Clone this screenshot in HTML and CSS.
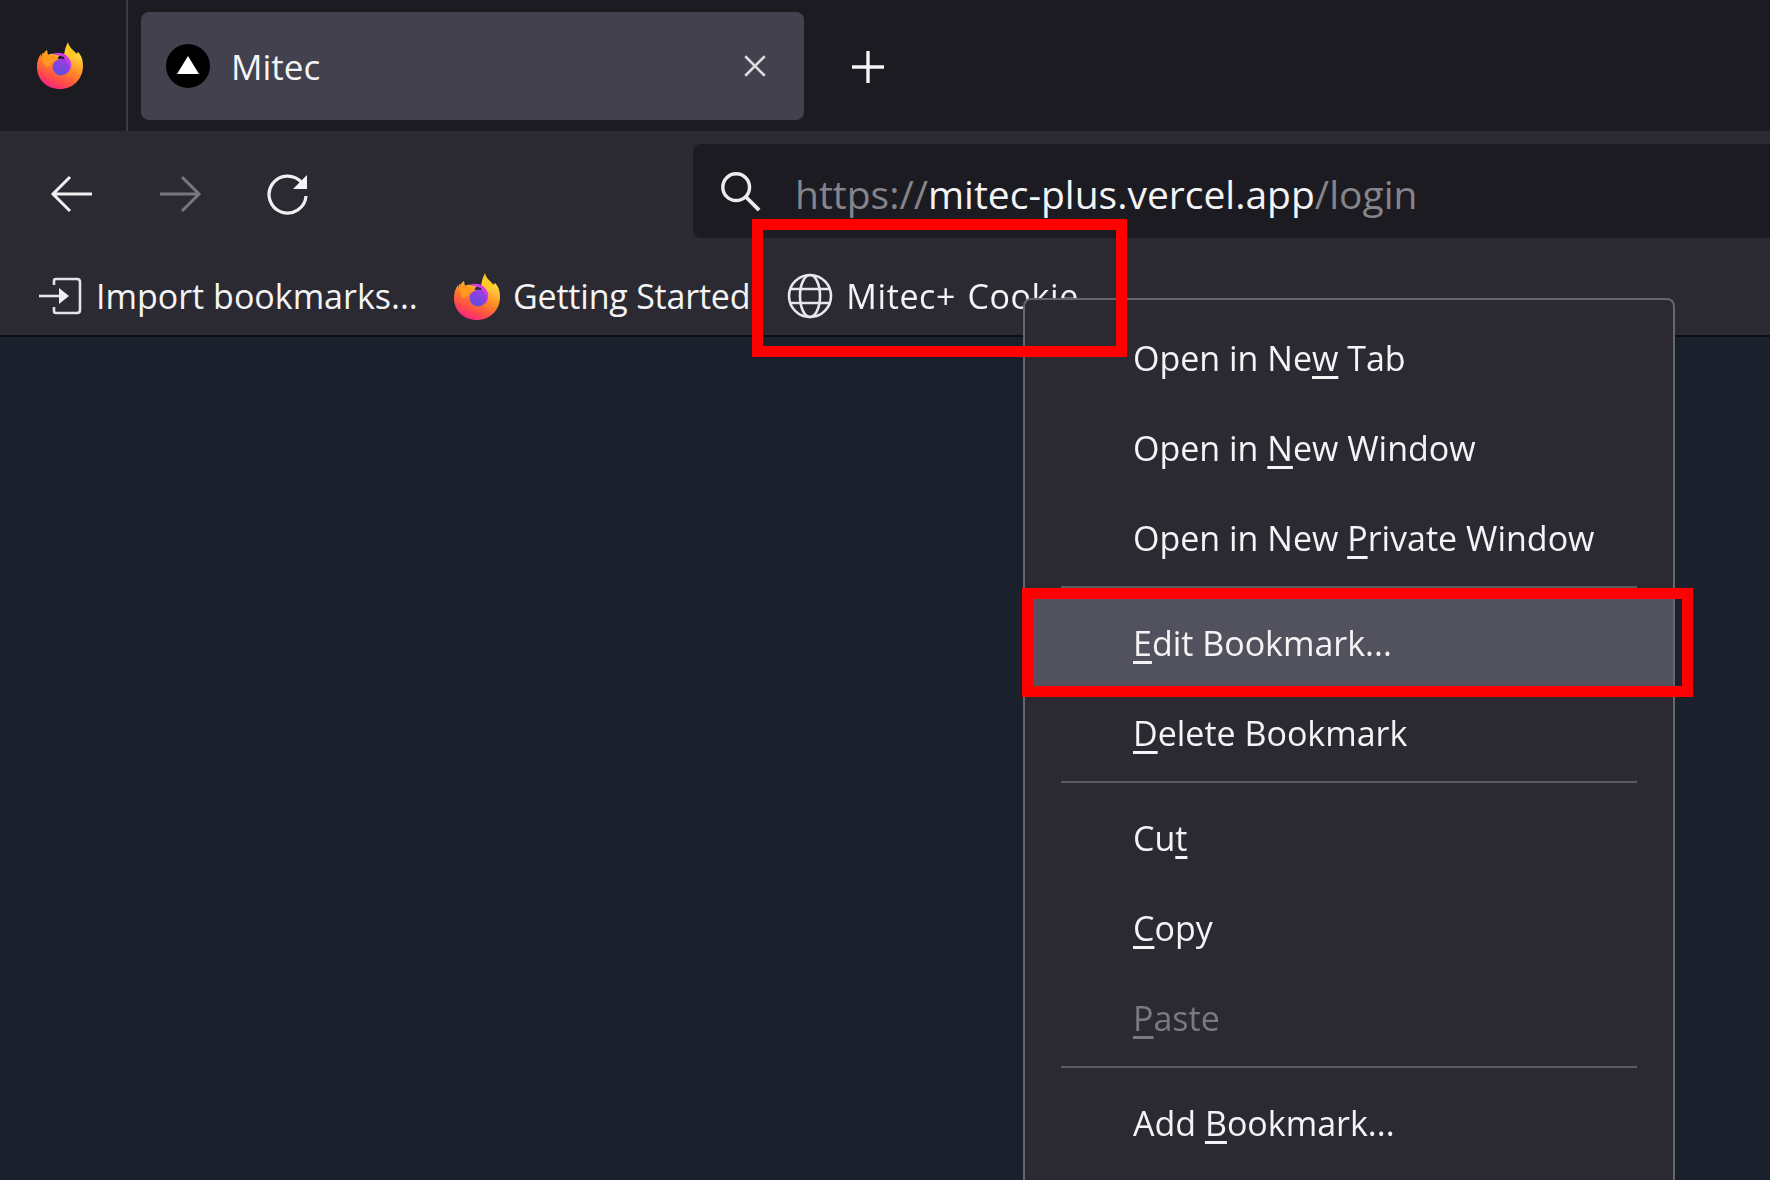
FILE: index.html
```html
<!DOCTYPE html>
<html lang="en">
<head>
    <meta charset="UTF-8">
    <meta name="viewport" content="width=device-width, initial-scale=1.0">
    <title>Mitec</title>
    <link rel="stylesheet" href="styles.css">
</head>
<body>
    <svg class="defs" width="0" height="0">
        <defs>
            <linearGradient id="fox-ring" x1="0.8" y1="0.1" x2="0.3" y2="1">
                <stop offset="0" stop-color="#ffd53d"/>
                <stop offset="0.4" stop-color="#ff8a24"/>
                <stop offset="0.75" stop-color="#ff4a4a"/>
                <stop offset="1" stop-color="#f5208a"/>
            </linearGradient>
            <linearGradient id="fox-core" x1="0.7" y1="0" x2="0.3" y2="1">
                <stop offset="0" stop-color="#a23be0"/>
                <stop offset="1" stop-color="#5a4fe0"/>
            </linearGradient>
            <symbol id="firefox" viewBox="0 0 48 48">
                <path fill="#ffc928" d="M32 1c1 5 4 7 8 11 5 5 7 11 6 17l-12-6c-2-3-4-5-6-7 0-6 2-11 4-15z"/>
                <path fill="url(#fox-ring)" d="M24 48C11 48 1 39 1 26c0-5 1-9 4-13l1 3c1-3 3-6 5-7l1 5c3-2 8-1 12 0l-4 5 14 2 8-10c4 4 5 9 5 14 0 13-10 23-23 23z"/>
                <path fill="#d43be0" d="M17 13c7-3 15 0 18 8 1 5-1 9-3 11l-4-16z"/>
                <circle cx="25" cy="26" r="8.5" fill="url(#fox-core)"/>
                <path fill="#ff9a1f" d="M6 12c3 1 6 2 8 2l9 4c-2 2-7 3-8 3 0 2-2 5-5 5C7 22 6 17 6 12z"/>
            </symbol>
        </defs>
    </svg>

    <div class="browser">
        <div class="titlebar">
            <div class="app-button">
                <svg class="logo"><use href="#firefox"/></svg>
            </div>
            <div class="tab">
                <svg class="favicon" viewBox="0 0 44 44">
                    <circle cx="22" cy="22" r="22" fill="#000"/>
                    <path d="M22 12 L33 30 L11 30 Z" fill="#fff"/>
                </svg>
                <span class="tab-title">Mitec</span>
                <svg class="tab-close" viewBox="0 0 24 24">
                    <path d="M3 3 L21 21 M21 3 L3 21" stroke="#dcdce0" stroke-width="2.4" fill="none"/>
                </svg>
            </div>
            <svg class="new-tab" viewBox="0 0 36 36">
                <path d="M18 2 V34 M2 18 H34" stroke="#f4f4f6" stroke-width="3.4" fill="none"/>
            </svg>
        </div>

        <div class="toolbar">
            <div class="nav-buttons">
                <svg class="nav-icon" viewBox="0 0 44 40">
                    <path d="M42 20 H4 M20 3 L3 20 L20 37" stroke="#f0f0f2" stroke-width="3" fill="none"/>
                </svg>
                <svg class="nav-icon" viewBox="0 0 44 40">
                    <path d="M2 20 H40 M24 3 L41 20 L24 37" stroke="#77767d" stroke-width="3" fill="none"/>
                </svg>
                <svg class="nav-icon" viewBox="0 0 44 44">
                    <path d="M36 11 A18.5 18.5 0 1 0 40 24" stroke="#f0f0f2" stroke-width="3.2" fill="none"/>
                    <path d="M41 3 V17 H27 Z" fill="#f4f4f6"/>
                </svg>
            </div>
            <div class="urlbar">
                <svg class="search-icon" viewBox="0 0 44 44">
                    <circle cx="18" cy="18" r="14" stroke="#ececef" stroke-width="3.6" fill="none"/>
                    <path d="M28 28 L42 42" stroke="#ececef" stroke-width="4" fill="none"/>
                </svg>
                <span class="url"><span class="url-dim">https://</span>mitec-plus.vercel.app<span class="url-dim">/login</span></span>
            </div>
        </div>

        <div class="bookmarks">
            <div class="bookmark import">
                <svg class="bm-icon" viewBox="0 0 44 40">
                    <path d="M16 9 V5 Q16 3 18 3 H39 Q42 3 42 6 V34 Q42 37 39 37 H18 Q16 37 16 35 V31" stroke="#e4e4e8" stroke-width="2.6" fill="none"/>
                    <path d="M1 20 H22" stroke="#e4e4e8" stroke-width="2.6" fill="none"/>
                    <path d="M21 12 L31 20 L21 28 Z" fill="#f0f0f2"/>
                </svg>
                <span>Import bookmarks...</span>
            </div>
            <div class="bookmark getting">
                <svg class="bm-logo"><use href="#firefox"/></svg>
                <span>Getting Started</span>
            </div>
            <div class="bookmark cookie">
                <svg class="bm-globe" viewBox="0 0 46 46">
                    <g stroke="#e8e8ec" stroke-width="2.6" fill="none">
                        <circle cx="23" cy="23" r="21"/>
                        <ellipse cx="23" cy="23" rx="10" ry="21"/>
                        <path d="M3 16 H43 M3 30 H43"/>
                    </g>
                </svg>
                <span>Mitec+ Cookie</span>
            </div>
        </div>

        <div class="page"></div>

        <div class="context-menu">
            <div class="menu-item">Open in Ne<u>w</u> Tab</div>
            <div class="menu-item">Open in <u>N</u>ew Window</div>
            <div class="menu-item">Open in New <u>P</u>rivate Window</div>
            <div class="menu-sep"></div>
            <div class="menu-item active"><u>E</u>dit Bookmark...</div>
            <div class="menu-item"><u>D</u>elete Bookmark</div>
            <div class="menu-sep"></div>
            <div class="menu-item">Cu<u>t</u></div>
            <div class="menu-item"><u>C</u>opy</div>
            <div class="menu-item disabled"><u>P</u>aste</div>
            <div class="menu-sep"></div>
            <div class="menu-item">Add <u>B</u>ookmark...</div>
        </div>
    </div>

    <div class="mark mark-bookmark"></div>
    <div class="mark mark-edit"></div>
</body>
</html>
```

FILE: styles.css
```css
html, body {
    height: 100%;
}
body {
    margin: 0;
    padding: 0;
    overflow: hidden;
    background-color: #1a202c;
    font-family: "Open Sans", "Noto Sans", sans-serif;
    color: #f4f4f6;
}
.defs {
    position: absolute;
}
.browser {
    display: flex;
    flex-direction: column;
    height: 100%;
    filter: blur(0.6px);
}

/* title bar */
.titlebar {
    display: flex;
    align-items: center;
    height: 131px;
    background-color: #1c1b22;
    flex-shrink: 0;
}
.app-button {
    display: flex;
    align-items: center;
    justify-content: center;
    width: 128px;
    height: 100%;
    padding-right: 6px;
    padding-bottom: 2px;
    box-sizing: border-box;
    border-right: 2px solid #3a3940;
}
.logo {
    width: 48px;
    height: 48px;
}
.tab {
    display: flex;
    align-items: center;
    width: 663px;
    height: 108px;
    margin-left: 13px;
    padding: 0 36px 0 25px;
    box-sizing: border-box;
    background-color: #42414d;
    border-radius: 8px;
}
.favicon {
    width: 44px;
    height: 44px;
    margin-right: 21px;
}
.tab-title {
    flex: 1;
    padding-top: 2px;
    font-size: 35px;
}
.tab-close {
    width: 26px;
    height: 26px;
}
.new-tab {
    width: 36px;
    height: 36px;
    margin-left: 46px;
    margin-top: 3px;
}

/* toolbar */
.toolbar {
    display: flex;
    height: 107px;
    padding-top: 13px;
    box-sizing: border-box;
    background-color: #2b2a33;
    flex-shrink: 0;
}
.nav-buttons {
    display: flex;
    align-items: center;
    width: 693px;
    height: 94px;
    padding-left: 50px;
    padding-top: 6px;
    box-sizing: border-box;
    gap: 64px;
}
.nav-icon {
    width: 44px;
    height: 44px;
}
.urlbar {
    display: flex;
    align-items: center;
    flex: 1;
    height: 94px;
    padding-left: 26px;
    background-color: #1c1b22;
    border-radius: 8px 0 0 8px;
}
.search-icon {
    width: 42px;
    height: 42px;
    margin-right: 34px;
}
.url {
    padding-top: 5px;
    font-size: 39px;
}
.url-dim {
    color: #85848b;
}

/* bookmarks bar */
.bookmarks {
    display: flex;
    align-items: center;
    height: 99px;
    padding-left: 38px;
    padding-top: 19px;
    box-sizing: border-box;
    background-color: #2b2a33;
    border-bottom: 2px solid #0e0e12;
    flex-shrink: 0;
    font-size: 34px;
    white-space: nowrap;
}
.bookmark {
    display: flex;
    align-items: center;
}
.import {
    width: 415px;
}
.bm-icon {
    width: 44px;
    height: 40px;
    margin-right: 14px;
}
.bm-logo {
    width: 48px;
    height: 48px;
    margin-right: 12px;
}
.getting {
    letter-spacing: -0.2px;
}
.cookie {
    margin-left: 37px;
    letter-spacing: 0.6px;
    word-spacing: 2px;
}
.bm-globe {
    width: 46px;
    height: 46px;
    margin-right: 13px;
}
.page {
    flex: 1;
    background-color: #1a202c;
}

/* context menu */
.context-menu {
    position: absolute;
    left: 1023px;
    top: 298px;
    bottom: -20px;
    width: 652px;
    padding-top: 13px;
    box-sizing: border-box;
    background-color: #2b2a33;
    border: 2px solid #66656c;
    border-radius: 8px 8px 0 0;
    font-size: 34px;
}
.menu-item {
    display: flex;
    align-items: center;
    white-space: pre;
    height: 90px;
    padding-left: 108px;
}
.menu-item.active {
    background-color: #52525e;
}
.menu-item.disabled {
    color: #7a7980;
}
.menu-item u {
    text-underline-offset: 5px;
    text-decoration-thickness: 3px;
}
.menu-sep {
    height: 2px;
    margin: 3px 36px 10px;
    background-color: #5a5960;
}

/* red annotation boxes */
.mark {
    position: absolute;
    box-sizing: border-box;
    border: 11px solid #ff0000;
}
.mark-bookmark {
    left: 752px;
    top: 219px;
    width: 375px;
    height: 138px;
}
.mark-edit {
    left: 1022px;
    top: 588px;
    width: 671px;
    height: 109px;
}
```
